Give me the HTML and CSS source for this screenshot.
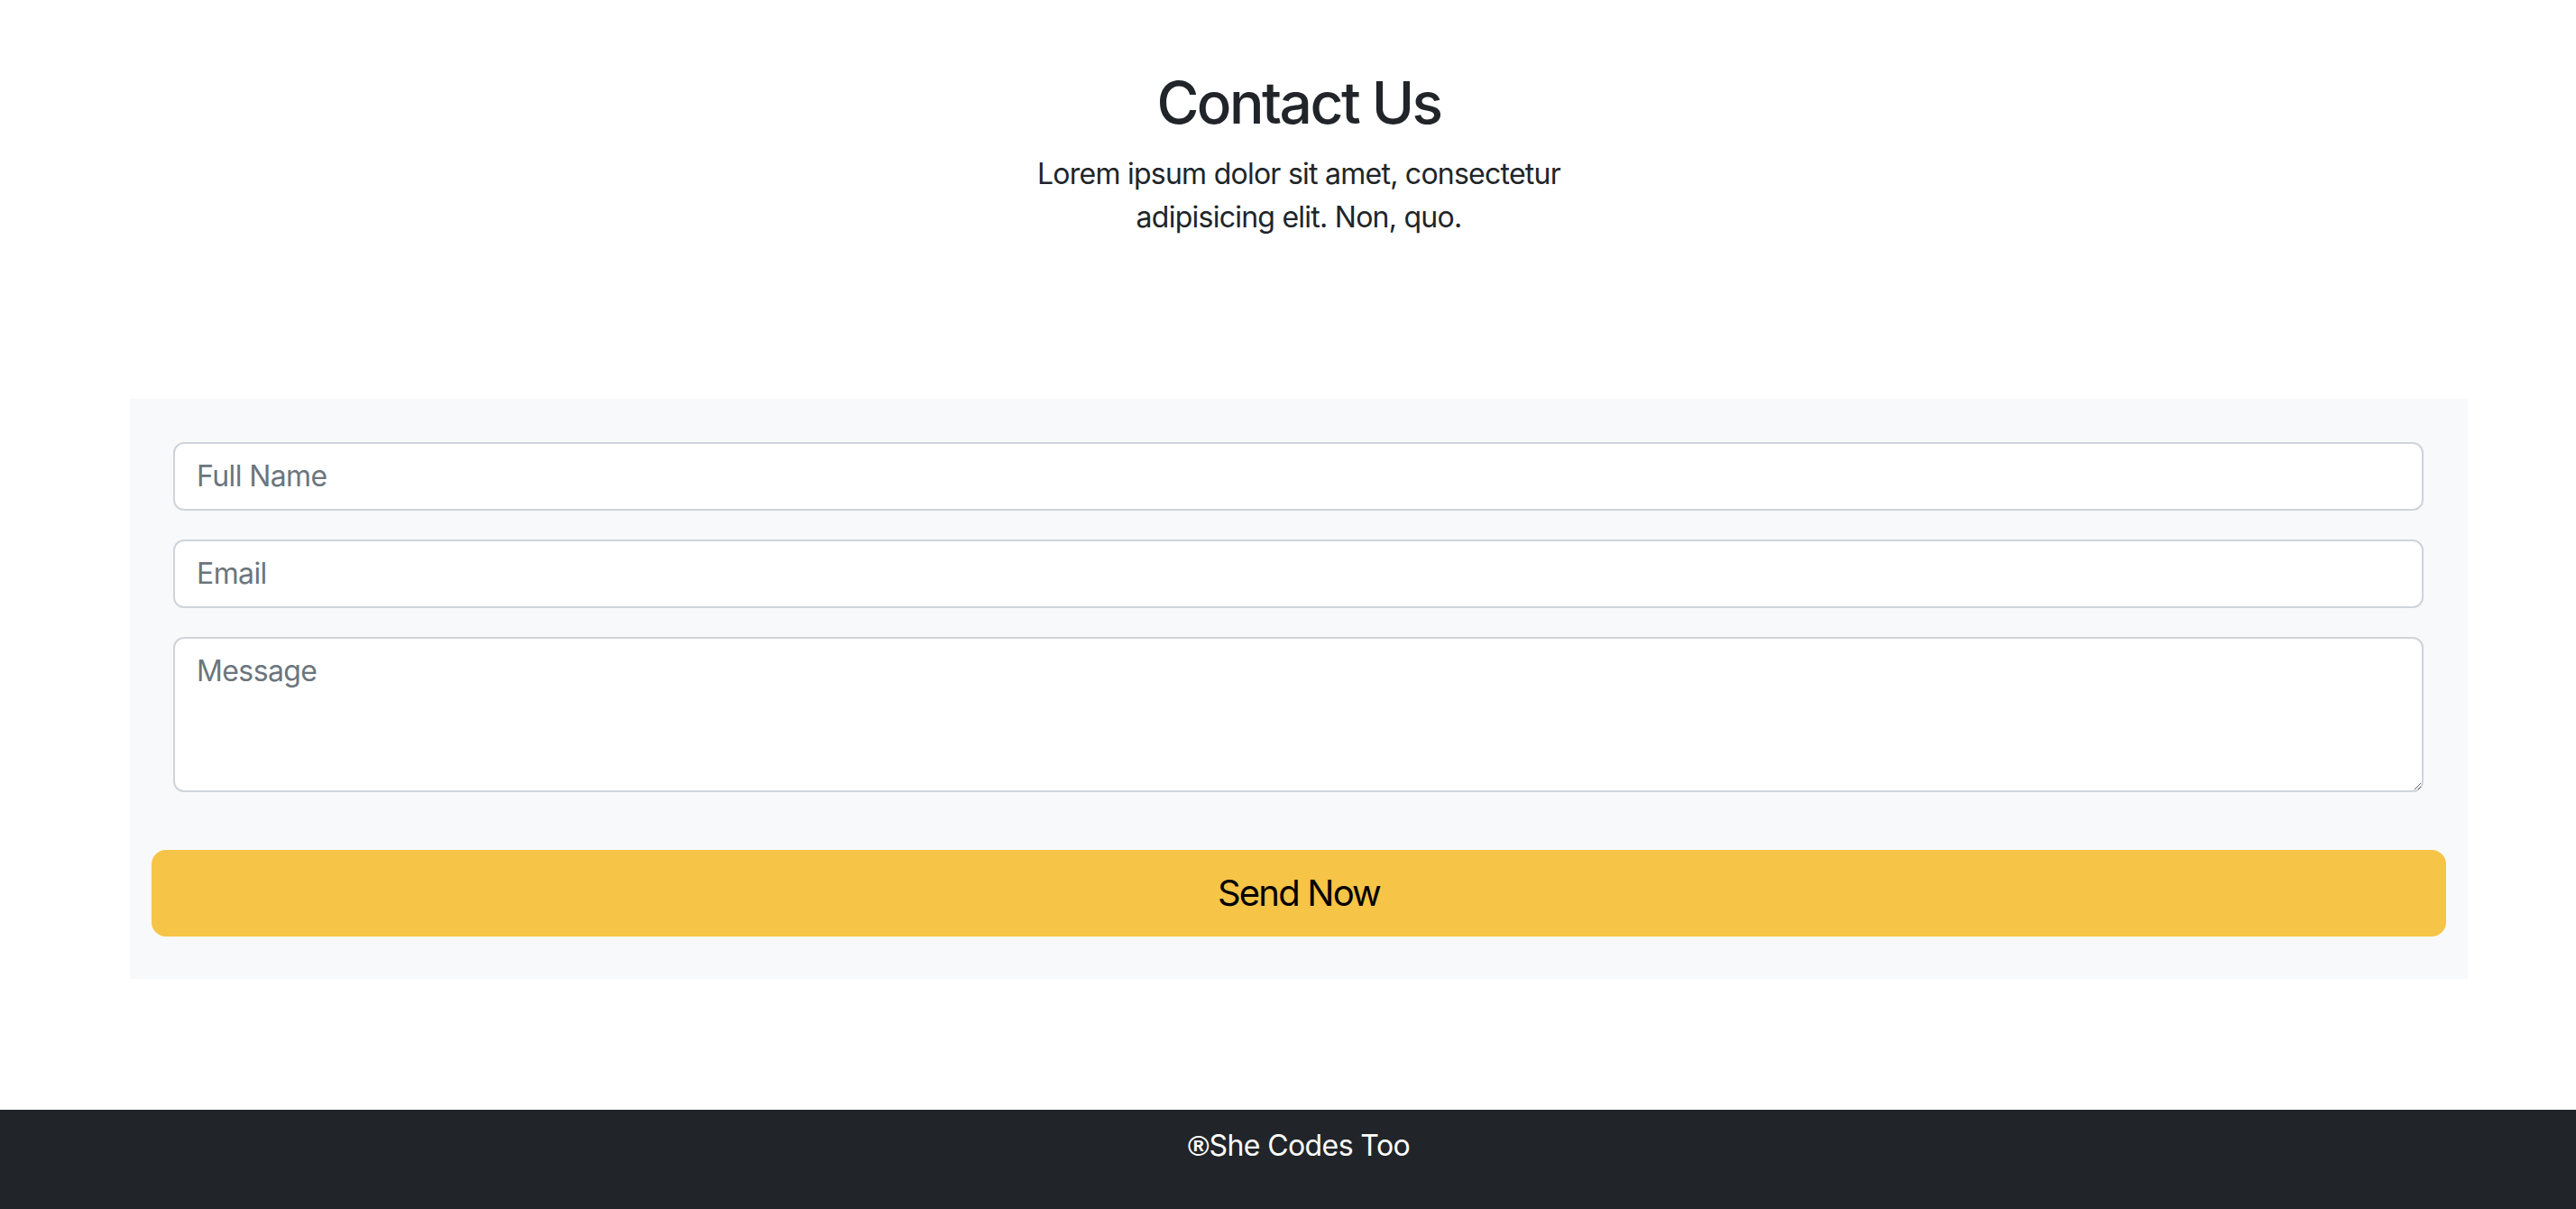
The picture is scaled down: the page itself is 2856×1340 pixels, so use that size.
FILE: index.html
```html
<!DOCTYPE html>
<html lang="en">
<head>
<meta charset="utf-8">
<title>Contact Us</title>
<link rel="stylesheet" href="styles.css">
</head>
<body>
<main class="page">
  <header class="intro">
    <h2 class="intro-title">Contact Us</h2>
    <p class="intro-text">Lorem ipsum dolor sit amet, consectetur adipisicing elit. Non, quo.</p>
  </header>
  <section class="contact">
    <form class="contact-form">
      <div class="fields">
        <input class="field" type="text" placeholder="Full Name">
        <input class="field" type="email" placeholder="Email">
        <textarea class="field field-area" rows="3" placeholder="Message"></textarea>
      </div>
      <button class="send-btn" type="button">Send Now</button>
    </form>
  </section>
</main>
<footer class="footer">
  <p class="footer-text"><span class="reg">®</span>She Codes Too</p>
</footer>
</body>
</html>
```

FILE: styles.css
```css
* { box-sizing: border-box; }
html { overflow: hidden; }
html, body { margin: 0; padding: 0; }
body {
  width: 2880px;
  font-family: Inter, "Noto Sans", "Liberation Sans", sans-serif;
  color: #212529;
  background: #fff;
  font-size: 32px;
  line-height: 1.5;
}
.page { display: flex; flex-direction: column; }
.intro {
  display: flex;
  flex-direction: column;
  align-items: center;
  text-align: center;
  padding-top: 76px;
}
.intro-title {
  font-size: 64px;
  font-weight: 500;
  line-height: 1.2;
  letter-spacing: -2.5px;
  margin: 0 0 16px;
}
.intro-text {
  margin: 0;
  max-width: 660px;
  font-size: 32px;
  line-height: 48px;
  letter-spacing: -0.75px;
}
.contact {
  margin: 177px 144px 0;
  background: #f8f9fa;
  padding: 48px 24px 47px;
}
.contact-form { display: flex; flex-direction: column; gap: 64px; }
.fields {
  display: flex;
  flex-direction: column;
  gap: 32px;
  padding: 0 25px 0 24px;
}
.field {
  display: block;
  width: 100%;
  font-family: inherit;
  font-size: 32px;
  line-height: 48px;
  letter-spacing: -0.6px;
  color: #212529;
  background: #fff;
  border: 2px solid #ced4da;
  border-radius: 12px;
  padding: 12px 24px;
  margin: 0;
  outline: none;
}
.field::placeholder { color: #6c757d; opacity: 1; }
.field-area { resize: vertical; height: 172px; }
.send-btn {
  display: block;
  width: 100%;
  height: 96px;
  font-family: inherit;
  font-size: 40px;
  line-height: 60px;
  letter-spacing: -1.8px;
  color: #000;
  background: #f6c447;
  border: 2px solid #f6c447;
  border-radius: 16px;
  padding: 16px 32px;
  cursor: pointer;
}
.footer {
  margin-top: 145px;
  background: #212529;
  color: #fff;
  text-align: center;
  height: 112px;
  padding-top: 16px;
}
.footer-text { margin: 0; font-size: 32px; line-height: 48px; letter-spacing: -0.6px; }
.reg { font-family: "Liberation Sans", sans-serif; font-size: 32px; font-weight: 700; letter-spacing: 0; }
```
